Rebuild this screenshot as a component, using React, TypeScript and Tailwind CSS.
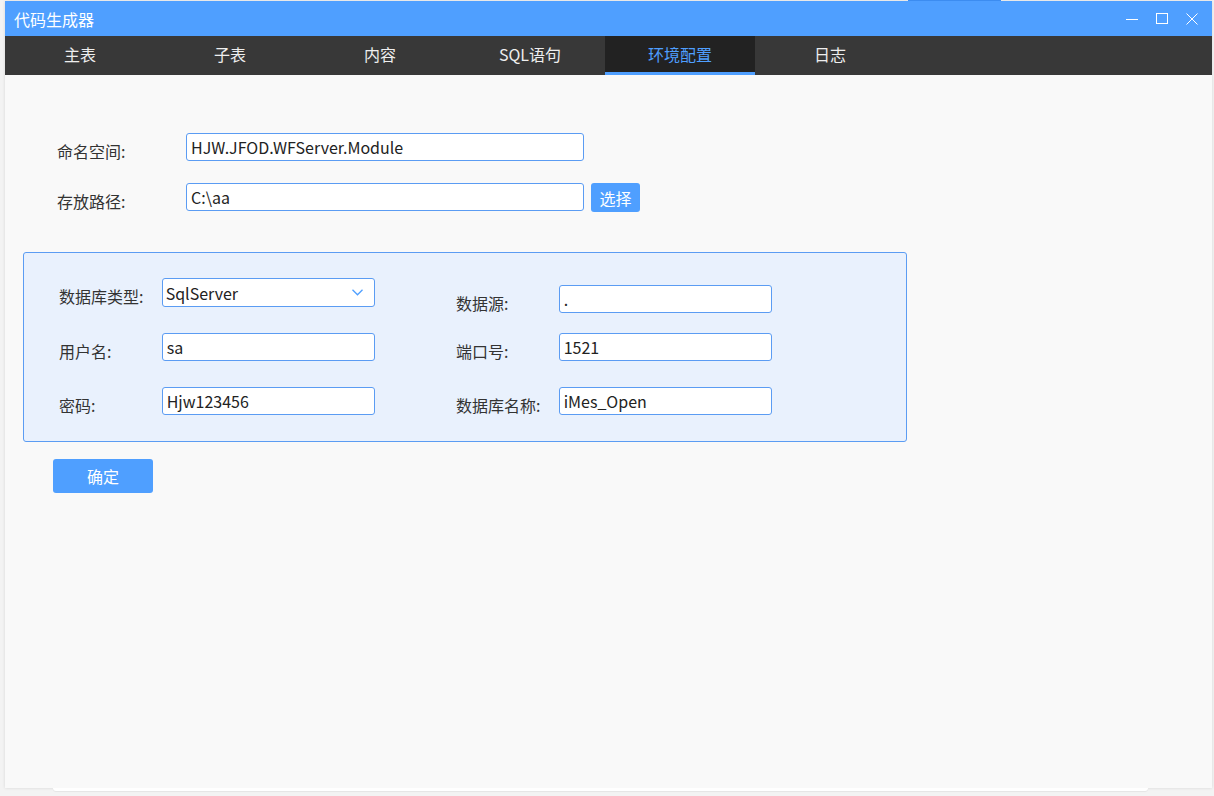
const font = { fontFamily: '"Noto Sans CJK SC", "Noto Sans", sans-serif' };

const tabs = ["主表", "子表", "内容", "SQL语句", "环境配置", "日志"];

function Field({ value, className = "" }: { value: string; className?: string }) {
  return (
    <div
      className={`h-[28px] bg-white border border-[#5b9cf3] rounded-[3px] flex items-center px-[4px] text-[16px] text-[#222] ${className}`}
    >
      {value}
    </div>
  );
}

function Row({
  label,
  children,
  labelWidth = "w-[103px]",
  className = "",
}: {
  label: string;
  children: React.ReactNode;
  labelWidth?: string;
  className?: string;
}) {
  return (
    <div className={`flex items-start ${className}`}>
      <div className={`${labelWidth} h-[28px] pt-[8px] leading-[20px] text-[16px] text-[#333]`}>
        {label}
      </div>
      {children}
    </div>
  );
}

export default function App() {
  return (
    <div className="w-[1214px] h-[796px] bg-[#f3f3f3] overflow-hidden" style={font}>
      <div className="h-[1px] flex">
        <div className="ml-[908px] w-[93px] bg-[#3c8cf0]" />
      </div>
      <div className="ml-[5px] w-[1207px] h-[787px] bg-[#f9f9f9] flex flex-col shadow-[0_0_3px_rgba(0,0,0,0.12)]">
        {/* title bar */}
        <div className="h-[35px] bg-[#4f9fff] flex items-center text-white">
          <div className="pl-[9px] text-[16px] flex-1">代码生成器</div>
          <div className="flex items-center gap-[18px] pr-[14px]">
            <svg width="12" height="12" viewBox="0 0 12 12">
              <line x1="0" y1="6.5" x2="12" y2="6.5" stroke="white" strokeWidth="1" />
            </svg>
            <svg width="12" height="12" viewBox="0 0 12 12">
              <rect x="0.5" y="0.5" width="11" height="10" fill="none" stroke="white" strokeWidth="1" />
            </svg>
            <svg width="12" height="12" viewBox="0 0 12 12">
              <path d="M0.5 0.5 L11.5 11.5 M11.5 0.5 L0.5 11.5" stroke="white" strokeWidth="1" />
            </svg>
          </div>
        </div>

        {/* tabs */}
        <div className="h-[39px] bg-[#383838] flex">
          {tabs.map((t, i) =>
            i === 4 ? (
              <div
                key={t}
                className="w-[150px] bg-[#222222] flex flex-col text-[#4f9fff] text-[16px]"
              >
                <div className="flex-1 flex items-center justify-center">{t}</div>
                <div className="h-[3px] bg-[#4f9fff]" />
              </div>
            ) : (
              <div
                key={t}
                className="w-[150px] flex items-center justify-center text-[#eeeeee] text-[16px] pb-[3px]"
              >
                {t}
              </div>
            )
          )}
        </div>

        {/* content */}
        <div className="flex-1 flex flex-col">
          <div className="pt-[58px] pl-[52px] flex flex-col gap-[22px]">
            <Row label="命名空间:" labelWidth="w-[129px]">
              <Field value="HJW.JFOD.WFServer.Module" className="w-[398px]" />
            </Row>
            <Row label="存放路径:" labelWidth="w-[129px]">
              <Field value="C:\aa" className="w-[398px]" />
              <button className="ml-[7px] h-[29px] w-[49px] bg-[#4f9fff] rounded-[3px] text-white text-[16px]">
                选择
              </button>
            </Row>
          </div>

          <div className="mt-[40px] ml-[18px] w-[884px] h-[190px] border border-[#5b9cf3] rounded-[3px] bg-[#e9f1fd] flex pl-[35px] pt-[25px]">
            <div className="w-[316px] flex flex-col">
              <Row label="数据库类型:">
                <div className="w-[214px] h-[29px] bg-white border border-[#5b9cf3] rounded-[3px] flex items-center justify-between pl-[3px] pr-[11px] text-[16px] text-[#222]">
                  SqlServer
                  <svg width="11" height="7" viewBox="0 0 11 7">
                    <path d="M0.5 0.8 L5.5 5.8 L10.5 0.8" fill="none" stroke="#4f9fff" strokeWidth="1.3" />
                  </svg>
                </div>
              </Row>
              <Row label="用户名:" className="mt-[26px]">
                <Field value="sa" className="w-[214px]" />
              </Row>
              <Row label="密码:" className="mt-[26px]">
                <Field value="Hjw123456" className="w-[214px]" />
              </Row>
            </div>
            <div className="ml-[81px] w-[316px] flex flex-col pt-[7px]">
              <Row label="数据源:">
                <Field value="." className="w-[214px]" />
              </Row>
              <Row label="端口号:" className="mt-[20px]">
                <Field value="1521" className="w-[214px]" />
              </Row>
              <Row label="数据库名称:" className="mt-[26px]">
                <Field value="iMes_Open" className="w-[214px]" />
              </Row>
            </div>
          </div>

          <button className="mt-[17px] ml-[48px] w-[100px] h-[34px] bg-[#4f9fff] rounded-[3px] text-white text-[16px]">
            确定
          </button>
        </div>
      </div>
      <div className="ml-[53px] w-[1095px] h-[3px] bg-white rounded-b-[3px] shadow-[0_1px_1px_rgba(0,0,0,0.06)]" />
    </div>
  );
}
